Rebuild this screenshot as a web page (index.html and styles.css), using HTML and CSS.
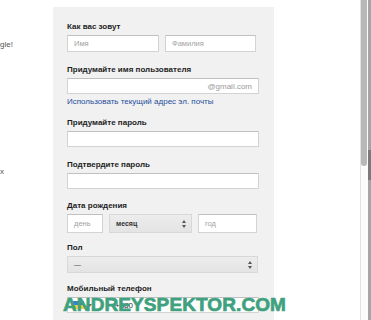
FILE: index.html
```html
<!DOCTYPE html>
<html lang="ru">
<head>
<meta charset="utf-8">
<title>Создайте аккаунт Google</title>
<link rel="stylesheet" href="styles.css">
</head>
<body>
<div class="page">
  <aside class="side">
    <div class="clip clip-top"><span>Один аккаунт для всех сервисов Google!</span></div>
    <div class="clip clip-bottom"><span>Доступ к данным на всех устройствах</span></div>
  </aside>

  <form class="panel">
    <div class="group g1">
      <div class="label">Как вас зовут</div>
      <div class="row">
        <div class="input tall name"><span class="ph">Имя</span></div>
        <div class="input tall name"><span class="ph">Фамилия</span></div>
      </div>
    </div>

    <div class="group g2">
      <div class="label">Придумайте имя пользователя</div>
      <div class="input suffix"><span class="ph">@gmail.com</span></div>
      <a class="link" href="#">Использовать текущий адрес эл. почты</a>
    </div>

    <div class="group g3">
      <div class="label">Придумайте пароль</div>
      <div class="input"></div>
    </div>

    <div class="group g4">
      <div class="label">Подтвердите пароль</div>
      <div class="input"></div>
    </div>

    <div class="group g5">
      <div class="label">Дата рождения</div>
      <div class="row date">
        <div class="input day"><span class="ph">день</span></div>
        <div class="select month">
          <span class="val">месяц</span>
          <svg class="arrows" width="4" height="8" viewBox="0 0 4 8"><path d="M2 0L4 3H0Z M0 5H4L2 8Z" fill="#555"/></svg>
        </div>
        <div class="input year"><span class="ph">год</span></div>
      </div>
    </div>

    <div class="group g6">
      <div class="label">Пол</div>
      <div class="select gender">
        <span class="val dash">—</span>
        <svg class="arrows" width="4" height="8" viewBox="0 0 4 8"><path d="M2 0L4 3H0Z M0 5H4L2 8Z" fill="#555"/></svg>
      </div>
    </div>

    <div class="group g7">
      <div class="label">Мобильный телефон</div>
      <div class="input phone">
        <svg class="flag" width="11" height="8" viewBox="0 0 11 8"><rect width="11" height="4" fill="#3b7fd4"/><rect y="4" width="11" height="4" fill="#f2d33a"/></svg>
        <svg class="caret" width="5" height="3" viewBox="0 0 5 3"><path d="M0 0H5L2.5 3Z" fill="#666"/></svg>
        <span class="code">+380</span>
      </div>
    </div>
  </form>

  <div class="filler"></div>

  <div class="scrollbar">
    <div class="track"><div class="thumb"></div></div>
    <div class="edge"><div class="edge-mark"></div></div>
  </div>
</div>

<div class="watermark">ANDREYSPEKTOR.COM</div>
</body>
</html>
```

FILE: styles.css
```css
* { box-sizing: border-box; }

html, body {
  margin: 0;
  padding: 0;
  height: 320px;
  overflow: hidden;
  background: #ffffff;
}

body {
  position: relative;
  font-family: "Liberation Sans", Arial, sans-serif;
  color: #222;
}

.page {
  display: flex;
  height: 320px;
}

/* left column, cut off by the viewport */
.side {
  width: 53px;
  flex: none;
  font-size: 8px;
  line-height: 10px;
  color: #555;
}

.clip {
  display: flex;
  justify-content: flex-end;
  overflow: hidden;
  white-space: nowrap;
}

.clip span { flex: none; }

.clip-top {
  width: 13px;
  margin-top: 40px;
}

.clip-bottom {
  width: 4px;
  margin-top: 117px;
}

/* form panel */
.panel {
  width: 221px;
  flex: none;
  margin: 7px 0 0;
  padding: 15px 15px 0 14px;
  background: #f1f1f1;
  display: flex;
  flex-direction: column;
}

.label {
  font-size: 8px;
  line-height: 10px;
  font-weight: bold;
  color: #1e1e1e;
  margin-bottom: 3px;
  white-space: nowrap;
}

.g1 { margin-bottom: 13px; }
.g2 { margin-bottom: 11px; }
.g3 { margin-bottom: 13px; }
.g4 { margin-bottom: 12px; }
.g5 { margin-bottom: 10px; }
.g6 { margin-bottom: 11px; }

.row {
  display: flex;
  gap: 6px;
}

.input {
  height: 16px;
  background: #ffffff;
  border: 1px solid #d3d3d3;
  border-top-color: #c0c0c0;
  display: flex;
  align-items: center;
  padding: 0 6px;
  font-size: 7.5px;
}

.input.tall { height: 17px; }

.ph { color: #a2a2a2; white-space: nowrap; }

.name { width: 92px; }
.name + .name { width: 91px; }

.suffix {
  justify-content: flex-end;
  font-size: 8px;
}

.suffix .ph { color: #9a9a9a; }

.link {
  display: block;
  margin-top: 3px;
  font-size: 8px;
  line-height: 10px;
  color: #1f4e9c;
  text-decoration: none;
  white-space: nowrap;
}

.date .input,
.date .select { height: 19px; }

.day { width: 36px; }
.month { width: 83px; }
.year { width: 59px; }

.select {
  height: 17px;
  background: linear-gradient(#ececec, #e4e4e4);
  border: 1px solid #d8d8d8;
  display: flex;
  align-items: center;
  justify-content: space-between;
  padding: 0 5px 0 6px;
  font-size: 7px;
}

.val {
  font-weight: bold;
  color: #333;
}

.dash {
  font-weight: normal;
  color: #555;
}

.gender { width: 191px; }

.phone {
  gap: 3px;
  padding-left: 5px;
}

.flag { flex: none; }
.caret { flex: none; margin-right: 20px; }

.code {
  font-size: 8px;
  color: #333;
}

.filler { flex: 1; }

/* window scrollbar */
.scrollbar {
  width: 11px;
  flex: none;
  display: flex;
  border-left: 1px solid #e2e2e2;
  background: #fbfbfb;
}

.track {
  width: 6px;
  margin-right: 1px;
}

.thumb {
  height: 166px;
  background: #b8b8b8;
  border-radius: 0 0 3px 3px;
}

.edge {
  width: 3px;
  background: #a6a6a6;
  display: flex;
  flex-direction: column;
}

.edge-mark {
  margin-top: 150px;
  height: 30px;
  background: #7a7a7a;
}

/* overlay watermark */
.watermark {
  position: absolute;
  left: 63px;
  top: 295px;
  font-size: 19px;
  line-height: 19px;
  font-weight: bold;
  letter-spacing: 0.1px;
  color: #3fa17e;
  -webkit-text-stroke: 0.7px #3fa17e;
  white-space: nowrap;
}
```
